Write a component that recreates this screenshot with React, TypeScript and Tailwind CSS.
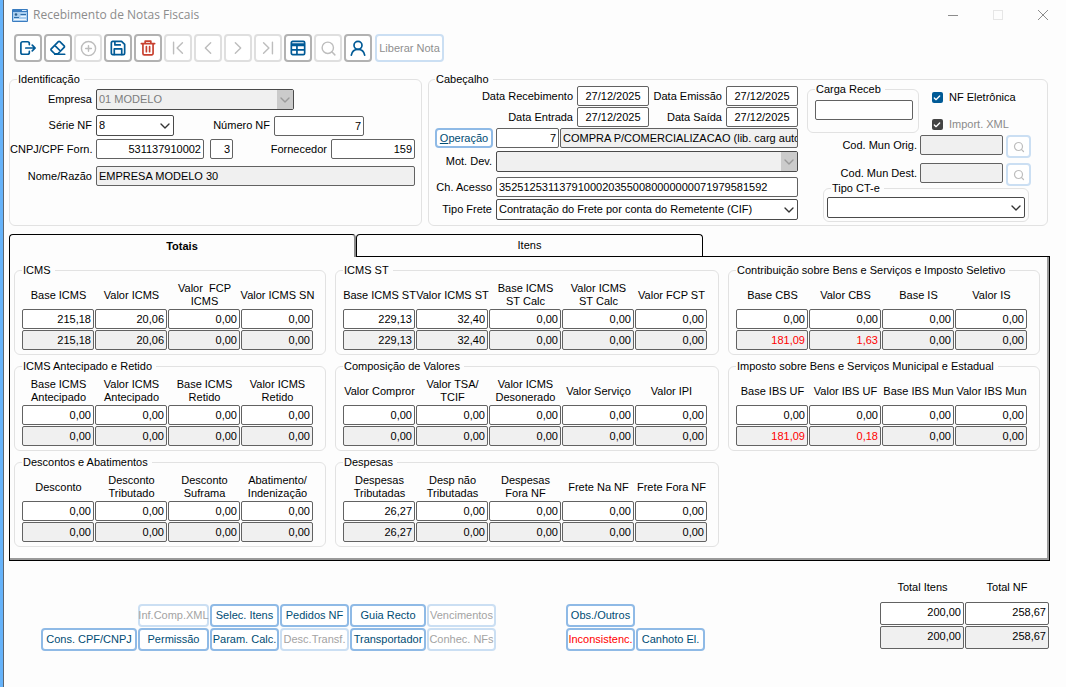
import { useState } from "react";
import type { ReactNode } from "react";
import { Check, ChevronDown, CirclePlus, Search } from "lucide-react";

interface Column {
  label: string;
  nota: string;
  calculado: string;
  diverge?: boolean;
}

interface Group {
  title: string;
  columns: Column[];
}

const zero = (label: string): Column => ({
  label,
  nota: "0,00",
  calculado: "0,00",
});

const value = (label: string, amount: string): Column => ({
  label,
  nota: amount,
  calculado: amount,
});

const icmsGroups: Group[] = [
  {
    title: "ICMS",
    columns: [
      value("Base ICMS", "215,18"),
      value("Valor ICMS", "20,06"),
      zero("Valor  FCP\nICMS"),
      zero("Valor ICMS SN"),
    ],
  },
  {
    title: "ICMS Antecipado e Retido",
    columns: [
      zero("Base ICMS\nAntecipado"),
      zero("Valor ICMS\nAntecipado"),
      zero("Base ICMS\nRetido"),
      zero("Valor ICMS\nRetido"),
    ],
  },
  {
    title: "Descontos e Abatimentos",
    columns: [
      zero("Desconto"),
      zero("Desconto\nTributado"),
      zero("Desconto\nSuframa"),
      zero("Abatimento/\nIndenização"),
    ],
  },
];

const stGroups: Group[] = [
  {
    title: "ICMS ST",
    columns: [
      value("Base ICMS ST", "229,13"),
      value("Valor ICMS ST", "32,40"),
      zero("Base ICMS\nST Calc"),
      zero("Valor ICMS\nST Calc"),
      zero("Valor FCP ST"),
    ],
  },
  {
    title: "Composição de Valores",
    columns: [
      zero("Valor Compror"),
      zero("Valor TSA/\nTCIF"),
      zero("Valor ICMS\nDesonerado"),
      zero("Valor Serviço"),
      zero("Valor IPI"),
    ],
  },
  {
    title: "Despesas",
    columns: [
      value("Despesas\nTributadas", "26,27"),
      zero("Desp não\nTributadas"),
      zero("Despesas\nFora NF"),
      zero("Frete Na NF"),
      zero("Frete Fora NF"),
    ],
  },
];

const reformaGroups: Group[] = [
  {
    title: "Contribuição sobre Bens e Serviços e Imposto Seletivo",
    columns: [
      { label: "Base CBS", nota: "0,00", calculado: "181,09", diverge: true },
      { label: "Valor CBS", nota: "0,00", calculado: "1,63", diverge: true },
      zero("Base IS"),
      zero("Valor IS"),
    ],
  },
  {
    title: "Imposto sobre Bens e Serviços Municipal e Estadual",
    columns: [
      { label: "Base IBS UF", nota: "0,00", calculado: "181,09", diverge: true },
      { label: "Valor IBS UF", nota: "0,00", calculado: "0,18", diverge: true },
      zero("Base IBS Mun"),
      zero("Valor IBS Mun"),
    ],
  },
];

/* ---------- icons ---------- */

interface GlyphProps {
  children: ReactNode;
  thin?: boolean;
}

function Glyph({ children, thin }: GlyphProps) {
  return (
    <svg
      viewBox="0 0 18 18"
      className="h-4 w-4"
      fill="none"
      stroke="currentColor"
      strokeWidth={thin ? 1.6 : 1.9}
      strokeLinecap="round"
      strokeLinejoin="round"
      aria-hidden="true"
    >
      {children}
    </svg>
  );
}

const ExitIcon = () => (
  <Glyph>
    <path d="M10.500 5.200V4a2 2 0 0 0-2-2H3a2 2 0 0 0-2 2v10a2 2 0 0 0 2 2h5.500a2 2 0 0 0 2-2v-1.200" />
    <path d="M6.500 9H17M13.800 5.800 17 9l-3.200 3.200" />
  </Glyph>
);

const EraserIcon = () => (
  <Glyph>
    <path d="m5.300 15.500-3.900-3.900a1.200 1.200 0 0 1 0-1.700l8-8a1.200 1.200 0 0 1 1.700 0l4.800 4.800a1.200 1.200 0 0 1 0 1.700l-7 7.100zM5.300 6l6.400 6.400M5.300 16H16.500" />
  </Glyph>
);

const SaveIcon = () => (
  <Glyph>
    <path d="M1.500 3a1.500 1.500 0 0 1 1.500-1.500h10L16.500 5v10a1.500 1.500 0 0 1-1.500 1.500H3A1.500 1.500 0 0 1 1.500 15z" />
    <path d="M4.800 16.200V10h8.400v6.200M5.500 2v3.500h6" />
  </Glyph>
);

const TrashIcon = () => (
  <Glyph>
    <path d="M1.500 4h15M5.800 3.800V1.300h6.400v2.500M3.300 4.200v11a1.500 1.500 0 0 0 1.500 1.500h8.400a1.500 1.500 0 0 0 1.500-1.500v-11M7.200 7.500v5.700M10.800 7.500v5.700" />
  </Glyph>
);

const FirstIcon = () => (
  <Glyph thin>
    <path d="M4 2.500v13M14 3 8 9l6 6" />
  </Glyph>
);

const PreviousIcon = () => (
  <Glyph thin>
    <path d="M12 3 6 9l6 6" />
  </Glyph>
);

const NextIcon = () => (
  <Glyph thin>
    <path d="m6 3 6 6-6 6" />
  </Glyph>
);

const LastIcon = () => (
  <Glyph thin>
    <path d="M14 2.500v13M4 3l6 6-6 6" />
  </Glyph>
);

const TableIcon = () => (
  <Glyph>
    <rect x="1.500" y="1.500" width="15" height="15" rx="1.500" />
    <path d="M2 4.500h14M2 6h14M2 11.200h14M7.800 6v10" />
  </Glyph>
);

const PersonIcon = () => (
  <Glyph>
    <circle cx="9" cy="6" r="4.500" />
    <path d="M1.500 17c.8-4 3.500-6.500 7.500-6.500s6.700 2.500 7.500 6.500" />
  </Glyph>
);

/* ---------- form controls ---------- */

interface FieldProps {
  id?: string;
  name?: string;
  text?: string;
  readOnly?: boolean;
  align?: "left" | "center" | "right";
  className?: string;
}

const alignments = {
  left: "pl-0.5 text-left",
  center: "text-center",
  right: "px-0.5 text-right",
};

function Field({
  id,
  name,
  text = "",
  readOnly,
  align = "right",
  className = "",
}: FieldProps) {
  return (
    <input
      id={id}
      aria-label={name}
      type="text"
      defaultValue={text}
      readOnly={readOnly}
      className={`block h-5 min-w-0 rounded-[2px] border border-[#626262] ${
        alignments[align]
      } ${readOnly ? "bg-[#f0f0f0]" : "bg-white"} ${className}`}
    />
  );
}

interface DropdownProps {
  id?: string;
  name?: string;
  options: string[];
  disabled?: boolean;
  className?: string;
}

function Dropdown({ id, name, options, disabled, className = "" }: DropdownProps) {
  return (
    <div className={`relative ${className}`}>
      <select
        id={id}
        aria-label={name}
        disabled={disabled}
        className={`block h-[21px] w-full appearance-none rounded-[2px] border border-[#4a4a4a] pr-5 pl-0.5 ${
          disabled ? "bg-[#f0f0f0] text-[#7d7d7d]" : "bg-white text-black"
        }`}
      >
        {options.map((option) => (
          <option key={option}>{option}</option>
        ))}
      </select>
      <span
        className={`pointer-events-none absolute top-px right-px bottom-px flex w-4 items-center justify-center ${
          disabled ? "bg-[#cbcbcb] text-[#9a9a9a]" : "text-[#333]"
        }`}
      >
        <ChevronDown size={16} strokeWidth={2} />
      </span>
    </div>
  );
}

interface CaptionProps {
  htmlFor?: string;
  children: ReactNode;
  className?: string;
}

function Caption({ htmlFor, children, className = "" }: CaptionProps) {
  return (
    <label
      htmlFor={htmlFor}
      className={`shrink-0 text-right whitespace-nowrap ${className}`}
    >
      {children}
    </label>
  );
}

interface BoxProps {
  title: string;
  children: ReactNode;
  className?: string;
  legendClassName?: string;
}

function Box({ title, children, className = "", legendClassName = "" }: BoxProps) {
  return (
    <fieldset className={`min-w-0 rounded-md border border-[#e2e2e2] ${className}`}>
      <legend className={`pr-1 pl-px leading-[13px] ${legendClassName}`}>
        {title}
      </legend>
      {children}
    </fieldset>
  );
}

interface ToolButtonProps {
  label: string;
  children: ReactNode;
  disabled?: boolean;
  danger?: boolean;
}

function ToolButton({ label, children, disabled, danger }: ToolButtonProps) {
  const tone = disabled
    ? "border-[#dfdfdf] text-[#bdbdbd]"
    : danger
      ? "border-[#b2b2b2] text-[#c8402f]"
      : "border-[#b2b2b2] text-[#005a96]";
  return (
    <button
      type="button"
      aria-label={label}
      disabled={disabled}
      className={`flex h-7 w-7 items-center justify-center rounded-[4px] border-2 bg-white ${tone}`}
    >
      {children}
    </button>
  );
}

interface ActionProps {
  children: ReactNode;
  disabled?: boolean;
  alert?: boolean;
  className?: string;
}

function Action({ children, disabled, alert, className = "" }: ActionProps) {
  const tone = disabled
    ? "border-[#cbdff3] text-[#a3a3a3]"
    : alert
      ? "border-[#8fbae6] text-[#ff0000]"
      : "border-[#8fbae6] text-[#004c74]";
  return (
    <button
      type="button"
      disabled={disabled}
      className={`flex h-[23px] items-center justify-center rounded-[4px] border-2 bg-white whitespace-nowrap ${tone} ${className}`}
    >
      {children}
    </button>
  );
}

interface TickProps {
  label: string;
  disabled?: boolean;
}

function Tick({ label, disabled }: TickProps) {
  return (
    <label
      className={`flex h-[13px] items-center gap-1.5 whitespace-nowrap ${
        disabled ? "text-[#8a8a8a]" : ""
      }`}
    >
      <span className="relative flex h-[11px] w-3 items-center justify-center">
        <input
          type="checkbox"
          defaultChecked
          disabled={disabled}
          className="peer h-[11px] w-[11px] appearance-none rounded-[2px] bg-white ring-1 ring-gray-500 checked:bg-[#005a96] checked:ring-0 disabled:checked:bg-[#444]"
        />
        <Check
          size={8}
          strokeWidth={4}
          className="pointer-events-none absolute hidden text-white peer-checked:block"
        />
      </span>
      {label}
    </label>
  );
}

function ValueTable({ title, columns }: Group) {
  return (
    <Box
      title={title}
      className={`pb-[3px] pl-[7px] ${columns.length > 4 ? "pr-2.5" : "pr-[11px]"}`}
    >
      <table className="w-full table-fixed border-separate border-spacing-0">
        <thead>
          <tr>
            {columns.map((column) => (
              <th
                key={column.label}
                scope="col"
                className="h-8 p-0 pt-1 text-center align-middle leading-[13px] font-normal whitespace-pre"
              >
                <span className="-mx-1 block">{column.label}</span>
              </th>
            ))}
          </tr>
        </thead>
        <tbody>
          <tr>
            {columns.map((column) => (
              <td key={column.label} className="p-0 pr-px pb-px">
                <Field name={column.label} text={column.nota} className="w-full" />
              </td>
            ))}
          </tr>
          <tr>
            {columns.map((column) => (
              <td key={column.label} className="p-0 pr-px pb-px">
                <Field
                  name={`${column.label} calculado`}
                  text={column.calculado}
                  readOnly
                  className={`w-full ${column.diverge ? "text-[#ff0000]" : ""}`}
                />
              </td>
            ))}
          </tr>
        </tbody>
      </table>
    </Box>
  );
}

/* ---------- page sections ---------- */

function TitleBar() {
  return (
    <header className="flex h-[30px] items-center pr-px pl-2 text-[#8c8c8c]">
      <svg viewBox="0 0 16 13" className="h-[13px] w-4" aria-hidden="true">
        <rect width="16" height="13" rx="1" fill="#3a7cc0" />
        <rect x="1" y="3" width="14" height="9" fill="#a9cdef" />
        <circle cx="4" cy="5.500" r="1.300" fill="#2d5f8c" />
        <path d="M2 8.500h5M8.500 5.500h5.500" stroke="#2f6ea8" />
        <path d="M8.500 7.500h5.500M2 10.500h12" stroke="#eef6fd" />
        <path d="M10 1.500h4.500" stroke="#d9ebfb" />
      </svg>
      <h1 className="ml-[5px] font-['Open_Sans',sans-serif] text-[12px] leading-4">
        Recebimento de Notas Fiscais
      </h1>
      <div className="ml-auto flex items-center">
        <button type="button" aria-label="Minimizar" className="flex h-6 w-[45px] items-center justify-center">
          <span className="h-px w-2.5 bg-[#8c8c8c]" />
        </button>
        <button type="button" aria-label="Maximizar" disabled className="flex h-6 w-[45px] items-center justify-center">
          <span className="h-2.5 w-2.5 border border-[#e6e6e6]" />
        </button>
        <button type="button" aria-label="Fechar" className="flex h-6 w-[45px] items-center justify-center">
          <svg viewBox="0 0 10 10" className="h-2.5 w-2.5" stroke="#8c8c8c" aria-hidden="true">
            <path d="M0 0l10 10M10 0 0 10" />
          </svg>
        </button>
      </div>
    </header>
  );
}

function Toolbar() {
  return (
    <div role="toolbar" className="mt-1 flex gap-0.5 pl-2.5">
      <ToolButton label="Sair">
        <ExitIcon />
      </ToolButton>
      <ToolButton label="Limpar">
        <EraserIcon />
      </ToolButton>
      <ToolButton label="Adicionar" disabled>
        <CirclePlus size={17} strokeWidth={2} />
      </ToolButton>
      <ToolButton label="Salvar">
        <SaveIcon />
      </ToolButton>
      <ToolButton label="Excluir" danger>
        <TrashIcon />
      </ToolButton>
      <ToolButton label="Primeiro" disabled>
        <FirstIcon />
      </ToolButton>
      <ToolButton label="Anterior" disabled>
        <PreviousIcon />
      </ToolButton>
      <ToolButton label="Próximo" disabled>
        <NextIcon />
      </ToolButton>
      <ToolButton label="Último" disabled>
        <LastIcon />
      </ToolButton>
      <ToolButton label="Tabela">
        <TableIcon />
      </ToolButton>
      <ToolButton label="Pesquisar" disabled>
        <Search size={17} strokeWidth={2} />
      </ToolButton>
      <ToolButton label="Usuário">
        <PersonIcon />
      </ToolButton>
      <button
        type="button"
        disabled
        className="ml-px flex h-7 w-[69px] items-center justify-center rounded-[4px] border-2 border-[#cbdff3] bg-white whitespace-nowrap text-[#8f8f8f]"
      >
        Liberar Nota
      </button>
    </div>
  );
}

function Identificacao() {
  return (
    <Box title="Identificação" legendClassName="ml-[7px]" className="pt-[3px] pr-[6px] pl-0">
      <div className="flex items-center gap-1">
        <Caption htmlFor="empresa" className="w-[82px]">Empresa</Caption>
        <Dropdown id="empresa" options={["01 MODELO"]} disabled className="w-[198px]" />
      </div>
      <div className="mt-[5px] flex items-center gap-1">
        <Caption htmlFor="serie" className="w-[82px]">Série NF</Caption>
        <Dropdown id="serie" options={["8"]} className="w-[78px]" />
        <Caption htmlFor="numero" className="w-[92px]">Número NF</Caption>
        <Field id="numero" text="7" className="w-[90px]" />
      </div>
      <div className="mt-[3px] flex items-center gap-1">
        <Caption htmlFor="cnpj" className="w-[82px]">CNPJ/CPF Forn.</Caption>
        <Field id="cnpj" text="531137910002" className="w-[108px]" />
        <Field name="Dígito" text="3" className="ml-0.5 w-[23px]" />
        <Caption htmlFor="fornecedor" className="ml-auto">Fornecedor</Caption>
        <Field id="fornecedor" text="159" className="w-[84px]" />
      </div>
      <div className="mt-[7px] flex items-center gap-1">
        <Caption htmlFor="razao" className="w-[82px]">Nome/Razão</Caption>
        <Field id="razao" text="EMPRESA MODELO 30" readOnly align="left" className="flex-1" />
      </div>
    </Box>
  );
}

function MunicipioRow({ id, label }: { id: string; label: string }) {
  return (
    <div className="flex items-start justify-end gap-[3px]">
      <Caption htmlFor={id} className="mt-1">{label}</Caption>
      <Field id={id} readOnly className="w-[83px]" />
      <button
        type="button"
        aria-label={`Pesquisar ${label}`}
        disabled
        className="flex h-[23px] w-[25px] items-center justify-center rounded-[4px] border-2 border-[#cbdff3] bg-white text-[#bdbdbd]"
      >
        <Search size={12} strokeWidth={2.4} />
      </button>
    </div>
  );
}

function Cabecalho() {
  return (
    <Box title="Cabeçalho" className="px-[6px] pb-[3px]">
      <div className="flex gap-[9px]">
        <div className="min-w-0 flex-1">
          <div className="flex items-center justify-end gap-1">
            <Caption htmlFor="recebimento">Data Recebimento</Caption>
            <Field id="recebimento" text="27/12/2025" align="center" className="w-[72px]" />
            <Caption htmlFor="emissao" className="w-[69px]">Data Emissão</Caption>
            <Field id="emissao" text="27/12/2025" align="center" className="w-[72px]" />
          </div>
          <div className="mt-px flex items-center justify-end gap-1">
            <Caption htmlFor="entrada">Data Entrada</Caption>
            <Field id="entrada" text="27/12/2025" align="center" className="w-[72px]" />
            <Caption htmlFor="saida" className="w-[69px]">Data Saída</Caption>
            <Field id="saida" text="27/12/2025" align="center" className="w-[72px]" />
          </div>
          <div className="mt-px flex items-center">
            <button
              type="button"
              className="mr-[3px] flex h-5 w-[58px] items-center justify-center rounded-[4px] border-2 border-[#8fbae6] bg-white text-[#004c74]"
            >
              <u>O</u>peração
            </button>
            <Field name="Código da operação" text="7" className="mr-px w-[63px]" />
            <Field
              name="Descrição da operação"
              text="COMPRA P/COMERCIALIZACAO (lib. carg auto"
              readOnly
              align="left"
              className="flex-1"
            />
          </div>
          <div className="mt-[3px] flex items-center gap-1">
            <Caption htmlFor="motivo" className="w-[57px]">Mot. Dev.</Caption>
            <Dropdown id="motivo" options={[""]} disabled className="flex-1" />
          </div>
          <div className="mt-[5px] flex items-center gap-1">
            <Caption htmlFor="chave" className="w-[57px]">Ch. Acesso</Caption>
            <Field
              id="chave"
              text="35251253113791000203550080000000071979581592"
              align="left"
              className="flex-1"
            />
          </div>
          <div className="mt-0.5 flex items-center gap-1">
            <Caption htmlFor="frete" className="w-[57px]">Tipo Frete</Caption>
            <Dropdown
              id="frete"
              options={["Contratação do Frete por conta do Remetente (CIF)"]}
              className="flex-1"
            />
          </div>
        </div>

        <div className="-mt-[3px] flex w-[234px] shrink-0 flex-col">
          <div className="flex">
            <Box title="Carga Receb" className="w-[112px] pt-1 pr-[5px] pb-3 pl-[7px]">
              <Field name="Carga Receb" className="w-full" />
            </Box>
            <div className="mt-2 ml-3 flex flex-col gap-3.5">
              <Tick label="NF Eletrônica" />
              <Tick label="Import. XML" disabled />
            </div>
          </div>
          <div className="mt-0.5 flex flex-col gap-[5px] pr-2.5">
            <MunicipioRow id="mun-orig" label="Cod. Mun Orig." />
            <MunicipioRow id="mun-dest" label="Cod. Mun Dest." />
          </div>
          <Box title="Tipo CT-e" legendClassName="ml-1" className="-mt-1 mr-3 ml-4 px-[3px] pt-0.5 pb-[3px]">
            <Dropdown name="Tipo CT-e" options={[""]} />
          </Box>
        </div>
      </div>
    </Box>
  );
}

function GroupColumn({ groups }: { groups: Group[] }) {
  return (
    <div className="flex min-w-0 flex-col gap-[5px]">
      {groups.map((group) => (
        <ValueTable key={group.title} {...group} />
      ))}
    </div>
  );
}

function Tabs() {
  const [active, setActive] = useState("Totais");

  return (
    <section className="mt-2">
      <div role="tablist" className="flex">
        {["Totais", "Itens"].map((tab) => (
          <button
            key={tab}
            type="button"
            role="tab"
            aria-selected={active === tab}
            onClick={() => setActive(tab)}
            className={`h-[22px] w-1/3 rounded-t-[4px] border border-b-0 border-black bg-[#fdfdfd] ${
              active === tab
                ? "relative z-10 -mb-px h-[23px] border-r-2 border-r-[#8a8a8a] font-bold"
                : ""
            }`}
          >
            {tab}
          </button>
        ))}
      </div>
      <div
        role="tabpanel"
        className="border border-black pt-[7px] pr-[9px] pb-[13px] pl-1 shadow-[inset_-2px_-2px_0_#9a9a9a]"
      >
        {active === "Totais" && (
          <div className="grid grid-cols-[312fr_384fr_312fr] gap-[9px]">
            <GroupColumn groups={icmsGroups} />
            <GroupColumn groups={stGroups} />
            <GroupColumn groups={reformaGroups} />
          </div>
        )}
      </div>
    </section>
  );
}

function Footer() {
  return (
    <footer className="mt-[19px] flex items-start pr-px pl-8">
      <div className="mt-6 grid grid-cols-[96px_71px_69px_69px_76px_69px] gap-px">
        <Action disabled className="col-start-2">Inf.Comp.XML</Action>
        <Action>Selec. Itens</Action>
        <Action>Pedidos NF</Action>
        <Action>Guia Recto</Action>
        <Action disabled>Vencimentos</Action>
        <Action>Cons. CPF/CNPJ</Action>
        <Action>Permissão</Action>
        <Action>Param. Calc.</Action>
        <Action disabled>Desc.Transf.</Action>
        <Action>Transportador</Action>
        <Action disabled>Conhec. NFs</Action>
      </div>
      <div className="mt-6 ml-[70px] grid grid-cols-[69px_69px] gap-px">
        <Action>Obs./Outros</Action>
        <Action alert className="col-start-1">Inconsistenc.</Action>
        <Action>Canhoto El.</Action>
      </div>
      <table className="ml-auto border-separate border-spacing-0">
        <thead>
          <tr>
            <th scope="col" className="h-[22px] p-0 pb-2 font-normal">Total Itens</th>
            <th scope="col" className="h-[22px] p-0 pb-2 font-normal">Total NF</th>
          </tr>
        </thead>
        <tbody>
          <tr>
            <td className="p-0 pr-px pb-px">
              <Field name="Total Itens" text="200,00" className="h-[23px] w-[84px] pb-1" />
            </td>
            <td className="p-0 pb-px">
              <Field name="Total NF" text="258,67" className="h-[23px] w-[84px] pb-1" />
            </td>
          </tr>
          <tr>
            <td className="p-0 pr-px">
              <Field name="Total Itens calculado" text="200,00" readOnly className="h-[23px] w-[84px] pb-1" />
            </td>
            <td className="p-0">
              <Field name="Total NF calculado" text="258,67" readOnly className="h-[23px] w-[84px] pb-1" />
            </td>
          </tr>
        </tbody>
      </table>
    </footer>
  );
}

export default function App() {
  return (
    <div className="min-h-screen border-l-3 border-[#66b3fa] bg-[#fdfdfd]">
      <div className="min-h-screen border-l border-[#5c6670] font-['Liberation_Sans',Arial,sans-serif] text-[11px] leading-[13px] text-black">
        <TitleBar />
        <Toolbar />
        <main className="mt-[11px] pr-4 pl-[5px]">
          <div className="mr-0.5 grid grid-cols-[413fr_620fr] gap-1.5">
            <Identificacao />
            <Cabecalho />
          </div>
          <Tabs />
          <Footer />
        </main>
      </div>
    </div>
  );
}
